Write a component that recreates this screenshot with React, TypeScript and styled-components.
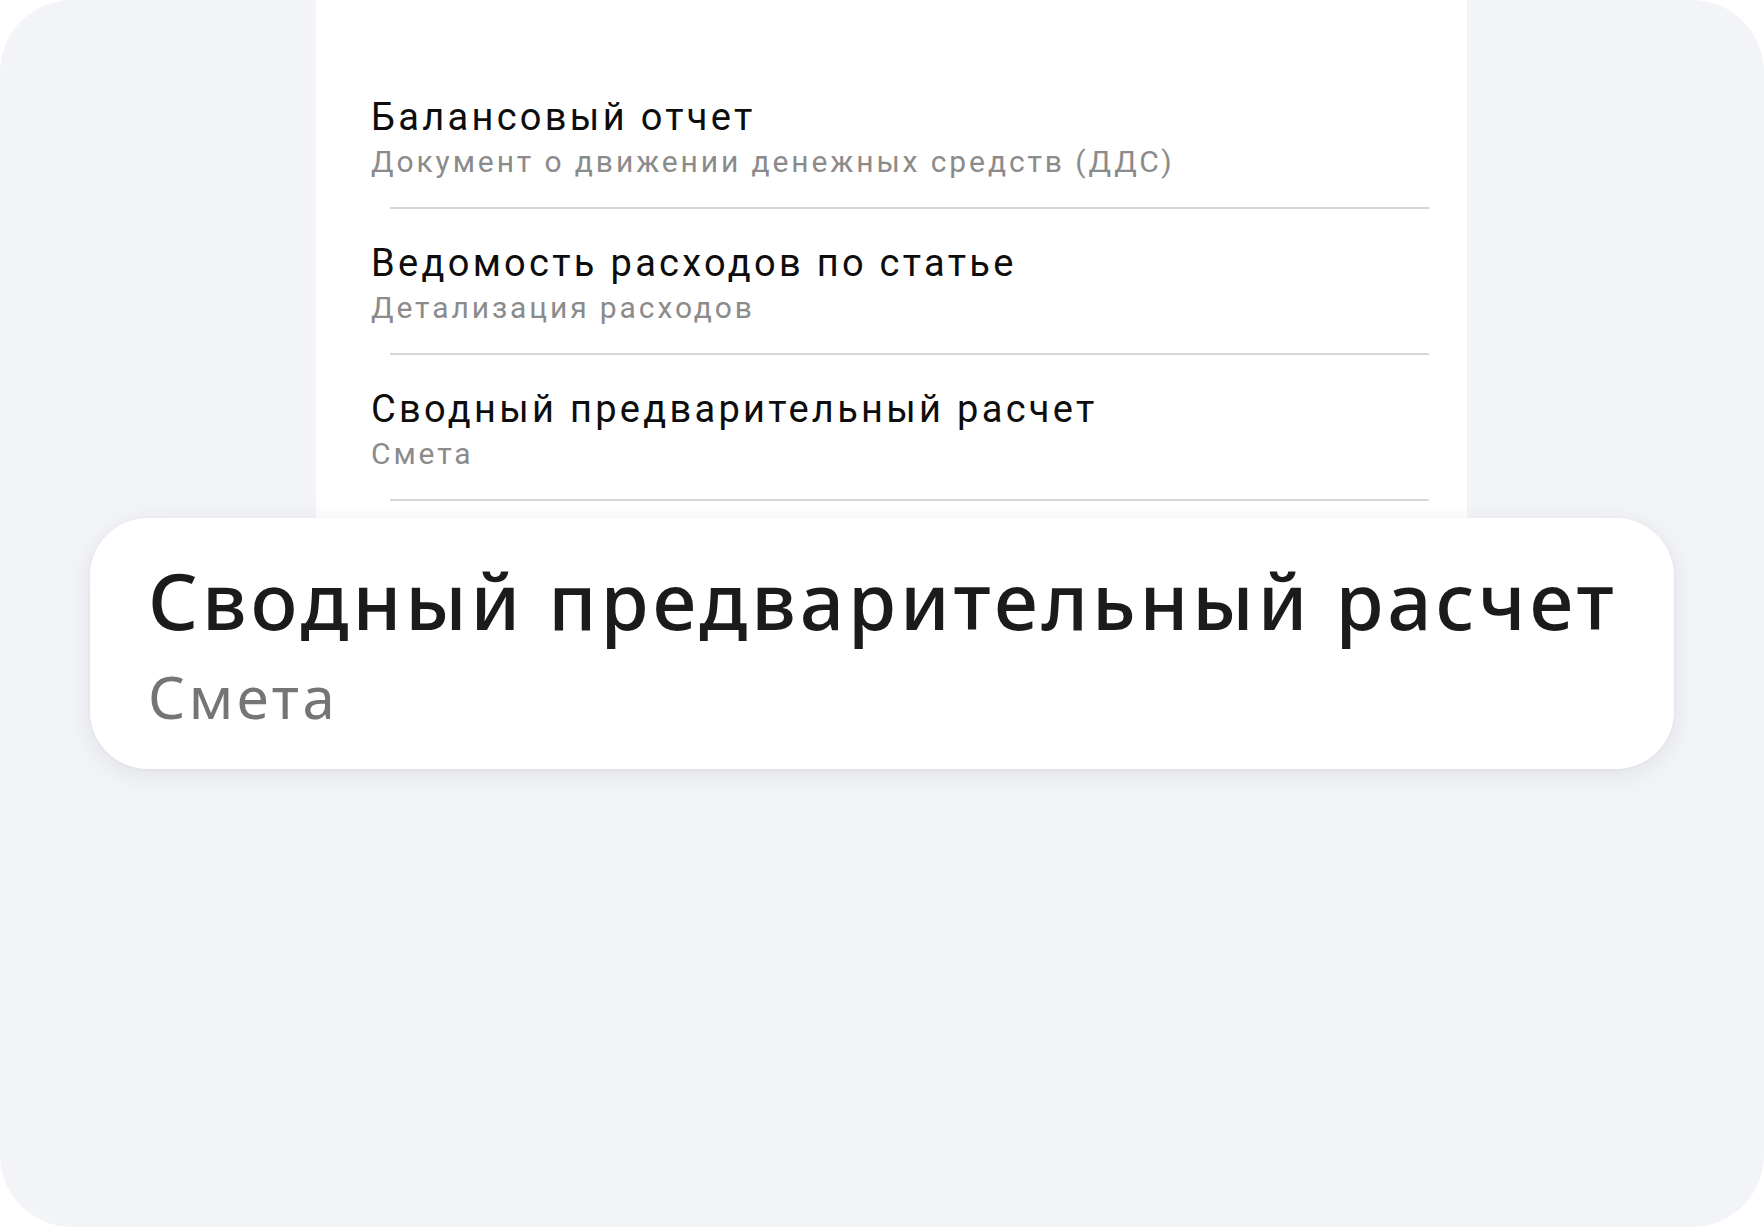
import React from "react";
import styled, { createGlobalStyle } from "styled-components";

const GlobalStyle = createGlobalStyle`
	html, body {
		margin: 0;
		padding: 0;
		background: #ffffff;
	}
	body {
		font-family: Roboto, "Liberation Sans", sans-serif;
		-webkit-font-smoothing: antialiased;
	}
`;

interface Report {
	title: string;
	subtitle: string;
}

const reports: Report[] = [
	{ title: "Балансовый отчет", subtitle: "Документ о движении денежных средств (ДДС)" },
	{ title: "Ведомость расходов по статье", subtitle: "Детализация расходов" },
	{ title: "Сводный предварительный расчет", subtitle: "Смета" },
];

const Frame = styled.div`
	width: 1764px;
	height: 1227px;
	background: #f3f4f8;
	border-radius: 72px;
	overflow: hidden;
	display: flex;
	flex-direction: column;
	align-items: flex-start;
`;

const ReportList = styled.ul`
	list-style: none;
	margin: 0 0 0 316px;
	width: 1151px;
	padding: 63px 0 17px;
	background: #ffffff;
	box-sizing: border-box;
`;

const ReportRow = styled.li`
	display: flex;
	flex-direction: column;
	padding: 32px 0 27px 55px;
	border-bottom: 2px solid transparent;
	position: relative;

	&::after {
		content: "";
		position: absolute;
		left: 74px;
		right: 38px;
		bottom: -2px;
		height: 2px;
		background: #d6d6d6;
	}
`;

const RowTitle = styled.span`
	font-family: Roboto, "Liberation Sans", sans-serif;
	font-size: 38px;
	line-height: 44px;
	color: #0d0d0d;
	letter-spacing: 3.3px;
	white-space: nowrap;
`;

const RowSubtitle = styled.span`
	margin-top: 5px;
	font-family: Roboto, "Liberation Sans", sans-serif;
	font-size: 30px;
	line-height: 36px;
	color: #8b8b8b;
	letter-spacing: 2.9px;
	white-space: nowrap;
`;

const FocusCard = styled.section`
	margin-left: 90px;
	width: 1584px;
	height: 251px;
	box-sizing: border-box;
	padding: 34px 0 0 58px;
	background: #ffffff;
	border-radius: 58px;
	box-shadow: 0 6px 28px rgba(20, 24, 40, 0.08), 0 1px 4px rgba(20, 24, 40, 0.04);
	display: flex;
	flex-direction: column;
`;

const CardTitle = styled.h2`
	margin: 0;
	font-family: "Noto Sans", "Open Sans", sans-serif;
	font-weight: 500;
	font-size: 78px;
	line-height: 96px;
	color: #1b1b1b;
	letter-spacing: 3.9px;
	white-space: nowrap;
`;

const CardSubtitle = styled.p`
	margin: 14px 0 0;
	font-family: "Noto Sans", "Open Sans", sans-serif;
	font-size: 58px;
	line-height: 70px;
	color: #757575;
	letter-spacing: 3.6px;
`;

export default function App() {
	const picked = reports[2];
	return (
		<>
			<GlobalStyle />
			<Frame>
				<ReportList>
					{reports.map((r) => (
						<ReportRow key={r.title}>
							<RowTitle>{r.title}</RowTitle>
							<RowSubtitle>{r.subtitle}</RowSubtitle>
						</ReportRow>
					))}
				</ReportList>
				<FocusCard>
					<CardTitle>{picked.title}</CardTitle>
					<CardSubtitle>{picked.subtitle}</CardSubtitle>
				</FocusCard>
			</Frame>
		</>
	);
}
